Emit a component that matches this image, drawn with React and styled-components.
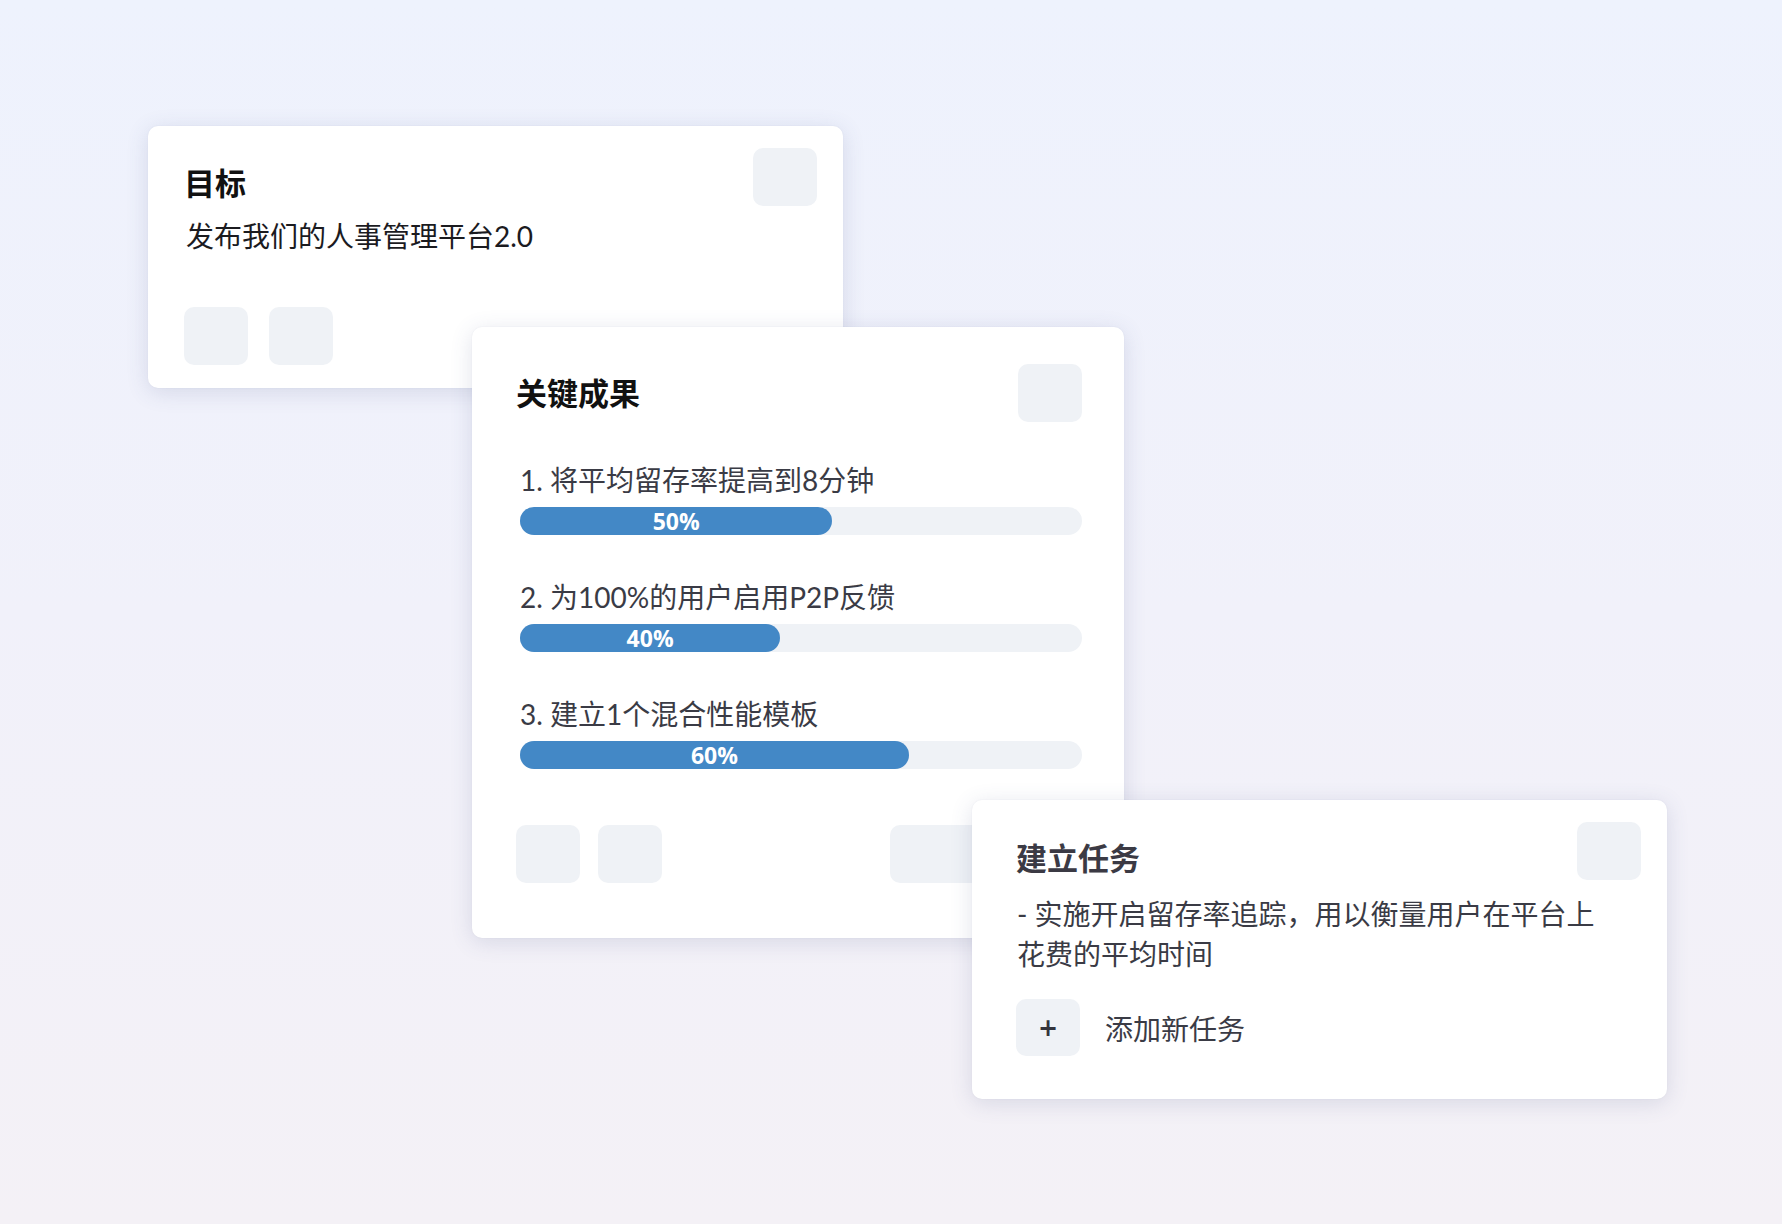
import styled, { createGlobalStyle } from "styled-components";

const GlobalStyle = createGlobalStyle`
  html, body {
    margin: 0;
    padding: 0;
  }
  body {
    font-family: Lato, "Noto Sans CJK SC", sans-serif;
  }
`

const Canvas = styled.div`
  position: relative;
  width: 1782px;
  height: 1224px;
  overflow: hidden;
  background: linear-gradient(180deg, #eef2fd 0%, #f1f1fa 50%, #f4f1f6 100%);
`

const Card = styled.div`
  position: absolute;
  left: ${p => p.$x}px;
  top: ${p => p.$y}px;
  width: ${p => p.$w}px;
  height: ${p => p.$h}px;
  box-sizing: border-box;
  padding: ${p => p.$pad};
  background: #fff;
  border-radius: 10px;
  box-shadow: 0 4px 22px rgba(70, 80, 130, 0.16), 0 0 2px rgba(40, 40, 80, 0.06);
  display: flex;
  flex-direction: column;
`

const Header = styled.div`
  display: flex;
  justify-content: space-between;
  align-items: ${p => p.$align || "flex-start"};
`

const Placeholder = styled.div`
  width: ${p => p.$w || 64}px;
  height: 58px;
  flex-shrink: 0;
  border-radius: 10px;
  background: #eff2f6;
`

const Title = styled.h2`
  margin: 0;
  padding-top: ${p => p.$top || 0}px;
  font-family: Lato, "Noto Sans CJK SC", sans-serif;
  font-size: 31px;
  line-height: 36px;
  font-weight: 700;
  color: ${p => p.$color || "#111"};
`

const Subtitle = styled.p`
  margin: 17px 0 0 2px;
  font-size: 28px;
  line-height: 36px;
  color: #1b1b1f;
`

const Footer = styled.div`
  margin-top: auto;
  display: flex;
  gap: ${p => p.$gap}px;
`

const Wide = styled(Placeholder)`
  margin-left: auto;
`

const List = styled.div`
  margin-top: 40px;
  padding-left: 4px;
  display: flex;
  flex-direction: column;
  gap: 44px;
`

const Item = styled.div`
  display: flex;
  flex-direction: column;
  gap: 9px;
`

const ItemText = styled.div`
  font-size: 28px;
  line-height: 36px;
  color: #3a3b45;
`

const Track = styled.div`
  height: 28px;
  border-radius: 14px;
  background: #eff2f6;
  display: flex;
`

const Fill = styled.div`
  height: 100%;
  border-radius: 14px;
  background: #4388c6;
  color: #fff;
  font-family: "Open Sans", sans-serif;
  font-weight: 700;
  font-size: 23px;
  display: flex;
  align-items: center;
  justify-content: center;
`

const Desc = styled.p`
  margin: 14px 0 0 1px;
  max-width: 590px;
  font-size: 28px;
  line-height: 40px;
  color: #3a3b45;
`

const AddRow = styled.div`
  margin-top: 25px;
  display: flex;
  align-items: center;
  gap: 25px;
`

const PlusButton = styled.div`
  width: 64px;
  height: 57px;
  border-radius: 10px;
  background: #eff2f6;
  display: flex;
  align-items: center;
  justify-content: center;
  font-family: "DejaVu Sans", sans-serif;
  font-weight: 700;
  font-size: 24px;
  color: #33343c;
`

const AddLabel = styled.span`
  font-size: 28px;
  color: #3a3b45;
`

const results = [
    { text: "1. 将平均留存率提高到8分钟", label: "50%", fill: 55.6 },
    { text: "2. 为100%的用户启用P2P反馈", label: "40%", fill: 46.3 },
    { text: "3. 建立1个混合性能模板", label: "60%", fill: 69.2 },
]

function App() {
    return (
        <>
            <GlobalStyle/>
            <Canvas>
                <Card $x={148} $y={126} $w={695} $h={262} $pad="22px 26px 23px 36px">
                    <Header>
                        <div>
                            <Title $top={17}>目标</Title>
                            <Subtitle>发布我们的人事管理平台2.0</Subtitle>
                        </div>
                        <Placeholder/>
                    </Header>
                    <Footer $gap={21}>
                        <Placeholder/>
                        <Placeholder/>
                    </Footer>
                </Card>

                <Card $x={472} $y={327} $w={652} $h={611} $pad="37px 42px 55px 44px">
                    <Header $align="center">
                        <Title>关键成果</Title>
                        <Placeholder/>
                    </Header>
                    <List>
                        {results.map(r => (
                            <Item key={r.label}>
                                <ItemText>{r.text}</ItemText>
                                <Track>
                                    <Fill style={{width: `${r.fill}%`}}>{r.label}</Fill>
                                </Track>
                            </Item>
                        ))}
                    </List>
                    <Footer $gap={18}>
                        <Placeholder/>
                        <Placeholder/>
                        <Wide $w={192}/>
                    </Footer>
                </Card>

                <Card $x={972} $y={800} $w={695} $h={299} $pad="22px 26px 43px 44px">
                    <Header>
                        <Title $top={18} $color="#3b3a44">建立任务</Title>
                        <Placeholder/>
                    </Header>
                    <Desc>- 实施开启留存率追踪，用以衡量用户在平台上花费的平均时间</Desc>
                    <AddRow>
                        <PlusButton>+</PlusButton>
                        <AddLabel>添加新任务</AddLabel>
                    </AddRow>
                </Card>
            </Canvas>
        </>
    )
}

export default App
